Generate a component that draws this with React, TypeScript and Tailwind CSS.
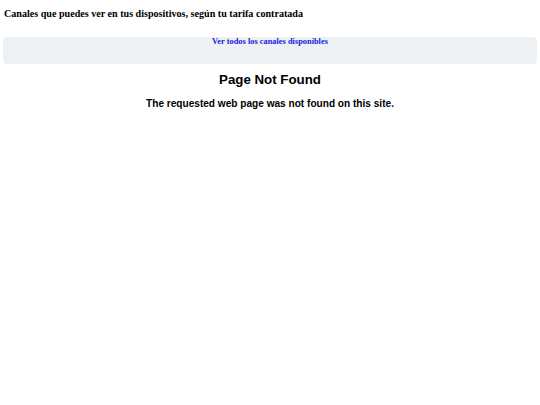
export default function App() {
  return (
    <div className="min-h-[405px] bg-white px-[3px]">
      {/* Header line */}
      <h3 className="pl-[1px] pt-[7px] text-[10.1px] leading-[13px] font-bold text-black font-['Liberation_Serif',serif]">
        Canales que puedes ver en tus dispositivos, según tu tarifa contratada
      </h3>

      {/* Channels box */}
      <div className="mt-[17px] h-[27px] rounded-[4px] bg-[#eef1f4] text-center">
        <a
          href="#"
          className="block text-[8.4px] leading-[10px] font-bold text-[#1a1adc] font-['Liberation_Serif',serif]"
        >
          Ver todos los canales disponibles
        </a>
      </div>

      {/* Error message */}
      <div className="text-center font-['Liberation_Sans',Arial,sans-serif] text-black">
        <h1 className="mt-[6px] text-[13.3px] font-bold leading-[20px]">Page Not Found</h1>
        <p className="mt-[7px] text-[10.1px] font-bold leading-[14px]">
          The requested web page was not found on this site.
        </p>
      </div>
    </div>
  );
}
